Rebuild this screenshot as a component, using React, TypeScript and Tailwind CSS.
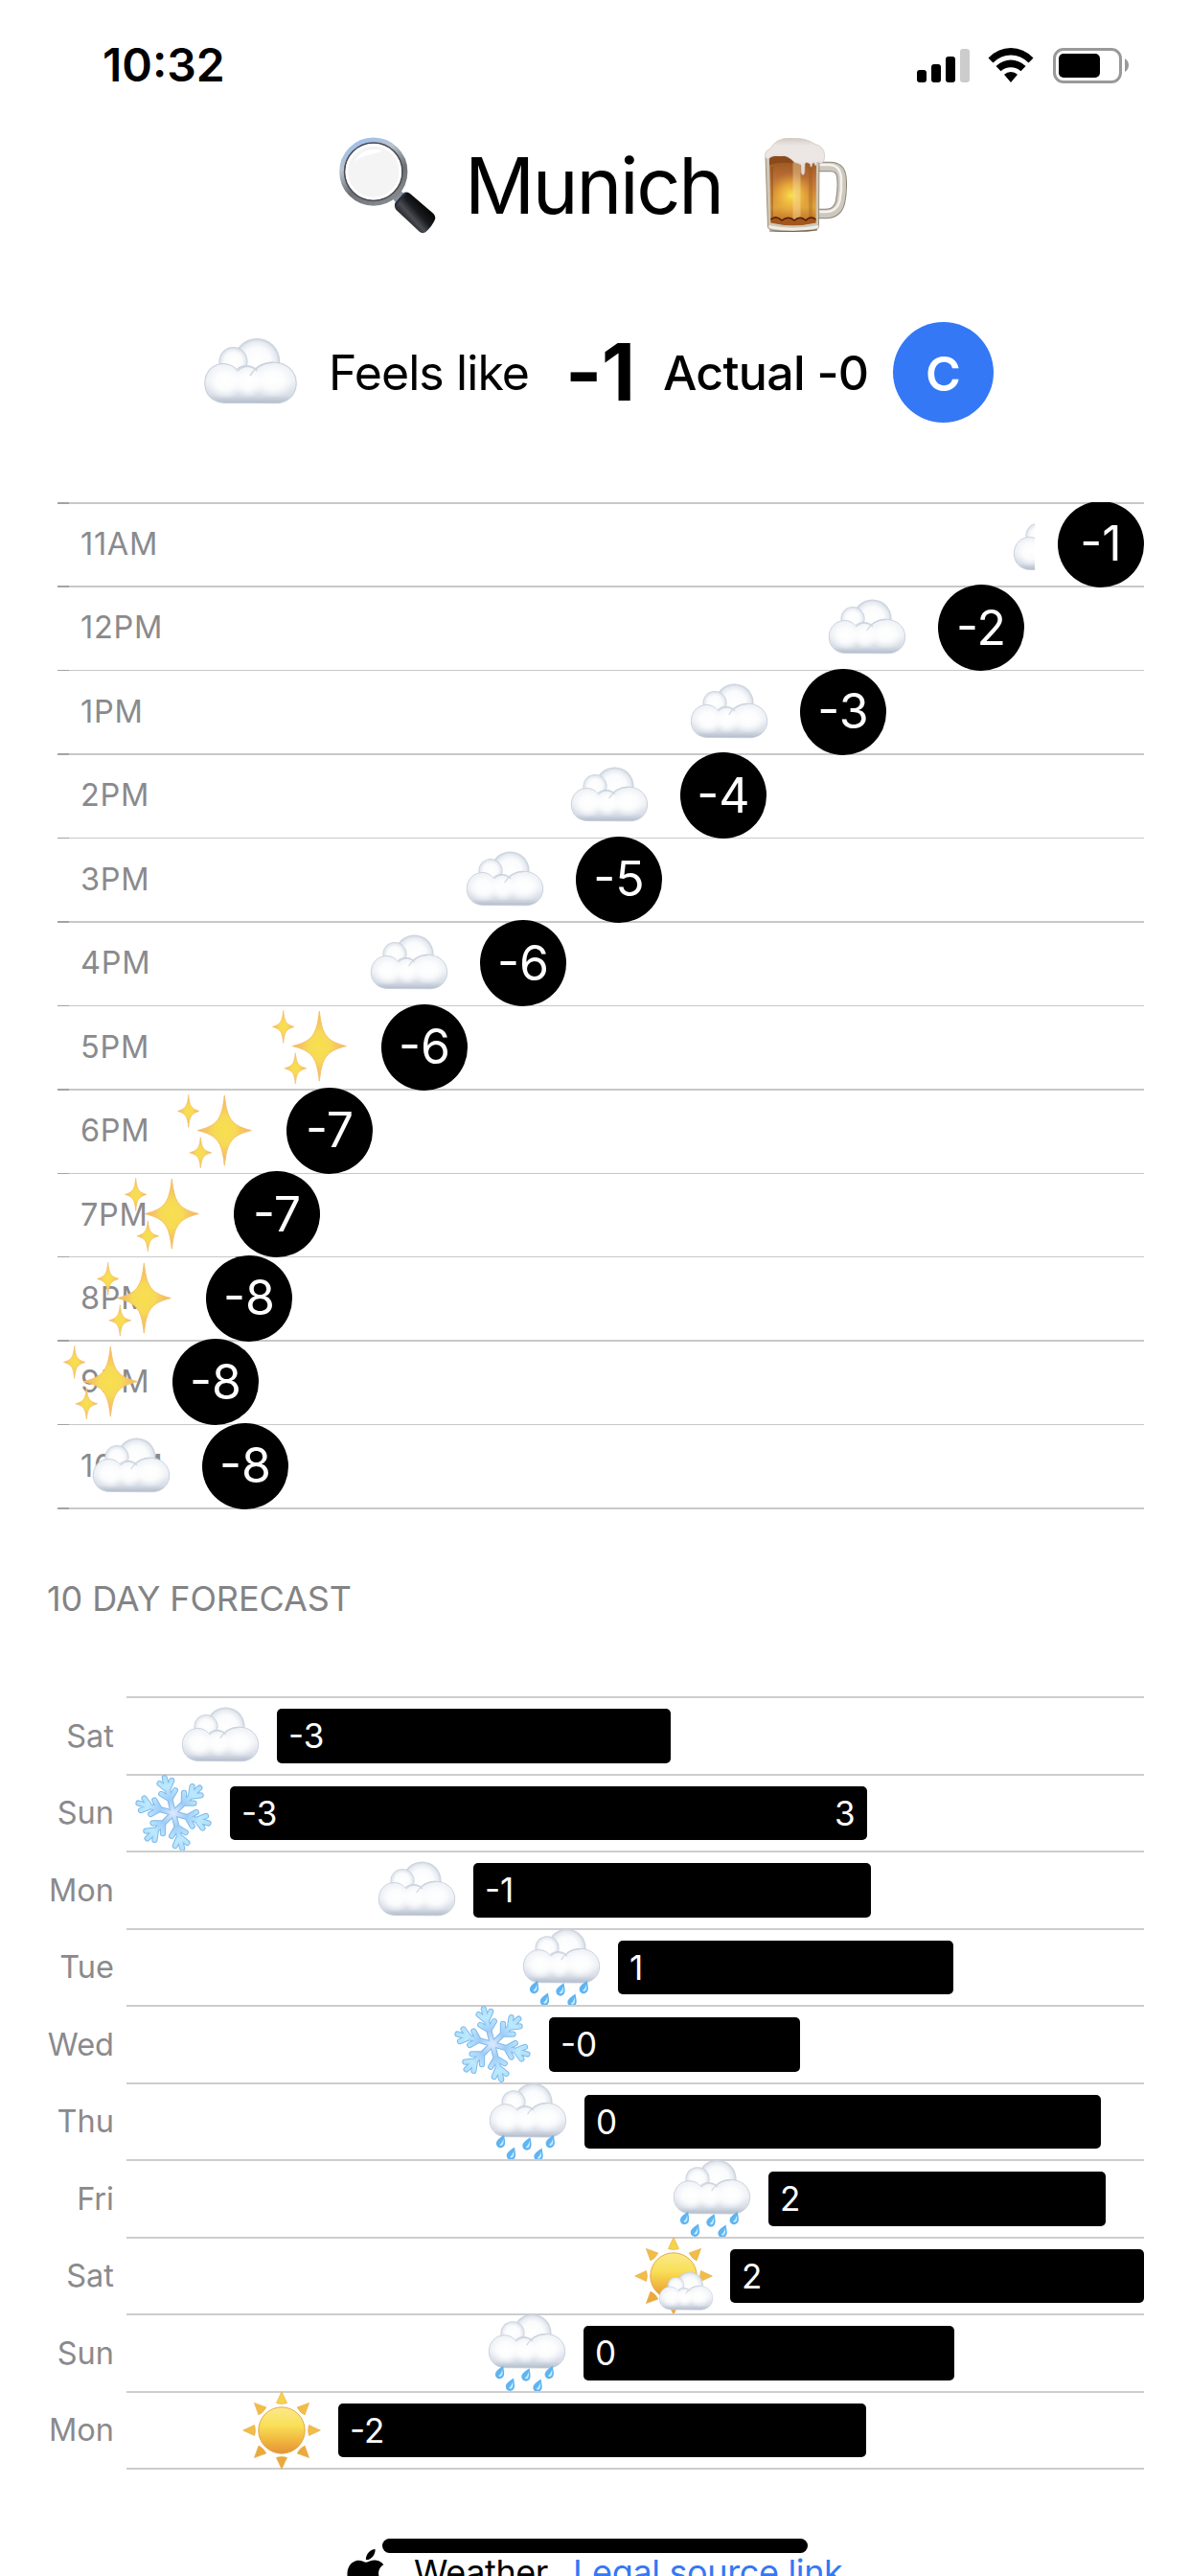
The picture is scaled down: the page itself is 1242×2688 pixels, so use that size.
import React, { useId } from "react";
import { SiApple } from "react-icons/si";

type Kind = "cloud" | "sparkles" | "snow" | "rain" | "sun" | "partly";

function CloudShape({ id }: { id: string }) {
  return (
    <g>
      <defs>
        <radialGradient id={`${id}a`} cx="0.5" cy="0.5" r="0.5">
          <stop offset="0" stopColor="#ffffff" />
          <stop offset="0.6" stopColor="#fafbfc" />
          <stop offset="0.86" stopColor="#e6eaf0" />
          <stop offset="1" stopColor="#c4cdd8" />
        </radialGradient>
        <linearGradient id={`${id}b`} x1="0" y1="34" x2="0" y2="69" gradientUnits="userSpaceOnUse">
          <stop offset="0" stopColor="#eff2f6" />
          <stop offset="0.45" stopColor="#eceff4" />
          <stop offset="0.8" stopColor="#d8dee7" />
          <stop offset="1" stopColor="#b0bac9" />
        </linearGradient>
        <radialGradient id={`${id}c`} cx="0.5" cy="0.5" r="0.5">
          <stop offset="0" stopColor="#ffffff" />
          <stop offset="0.5" stopColor="#ffffff" stopOpacity="0.85" />
          <stop offset="1" stopColor="#ffffff" stopOpacity="0" />
        </radialGradient>
      </defs>
      <circle cx="47.5" cy="32.5" r="20" fill={`url(#${id}a)`} />
      <circle cx="27" cy="32.5" r="12.5" fill={`url(#${id}a)`} />
      <path
        d="M20 68.5C9 68.5 2.3 61 2.3 51.5C2.3 41.5 9.5 34.5 18.5 34.5C23 34.5 27 36.3 29.8 39.8C34 35.6 42 35.2 46.6 39.4C50.6 35.4 56 33.2 61.5 33.2C73 33.2 81.7 41 81.7 51.5C81.7 61.5 74 68.8 63.5 68.8Z"
        fill={`url(#${id}b)`}
        stroke="#c6ceda"
        strokeWidth="0.9"
      />
      <ellipse cx="20" cy="50" rx="17" ry="15" fill={`url(#${id}c)`} />
      <ellipse cx="61.5" cy="49" rx="19.5" ry="15" fill={`url(#${id}c)`} />
      <ellipse cx="40" cy="50" rx="14" ry="14" fill={`url(#${id}c)`} />
      <path d="M31 40.5C36 35.6 43 36 47.4 40.4M42 44.5C46 37.5 53 33.8 61 33.6" fill="none" stroke="#c6ceda" strokeWidth="1.5" strokeLinecap="round" opacity="0.7" />
    </g>
  );
}

function SunShape({ id }: { id: string }) {
  return (
    <g>
      <defs>
        <linearGradient id={`${id}s`} x1="0" y1="0" x2="0" y2="1">
          <stop offset="0" stopColor="#fbe98a" />
          <stop offset="0.4" stopColor="#f9df57" />
          <stop offset="0.75" stopColor="#efb23c" />
          <stop offset="1" stopColor="#e3933a" />
        </linearGradient>
      </defs>
      {[0, 45, 90, 135, 180, 225, 270, 315].map((a) => (
        <path
          key={a}
          d="M42 1.6L47.6 13.6Q42 15.4 36.4 13.6Z"
          transform={`rotate(${a} 42 42)`}
          fill={a > 90 && a < 270 ? "#eba93c" : a === 0 ? "#f6d34b" : "#f1bd45"}
          stroke="#e6a94a"
          strokeWidth="0.6"
        />
      ))}
      <circle cx="42" cy="42" r="24.2" fill={`url(#${id}s)`} stroke="#e2a040" strokeWidth="0.9" />
    </g>
  );
}

function star(cx: number, cy: number, rx: number, ry: number) {
  const a = rx * 0.2;
  const b = ry * 0.16;
  return `M${cx} ${cy - ry}C${cx + a * 0.5} ${cy - b * 2.2} ${cx + a * 1.1} ${cy - b * 0.9} ${cx + rx} ${cy}C${cx + a * 1.1} ${cy + b * 0.9} ${cx + a * 0.5} ${cy + b * 2.2} ${cx} ${cy + ry}C${cx - a * 0.5} ${cy + b * 2.2} ${cx - a * 1.1} ${cy + b * 0.9} ${cx - rx} ${cy}C${cx - a * 1.1} ${cy - b * 0.9} ${cx - a * 0.5} ${cy - b * 2.2} ${cx} ${cy - ry}Z`;
}

function Sparkles({ id }: { id: string }) {
  const stars: [number, number, number, number][] = [
    [51.3, 41.6, 28, 36.5],
    [13.7, 21.4, 11.2, 17],
    [26.3, 64.8, 11.4, 16],
  ];
  return (
    <g>
      <defs>
        <radialGradient id={`${id}k`}>
          <stop offset="0" stopColor="#f7e04f" />
          <stop offset="0.4" stopColor="#f7da55" />
          <stop offset="0.75" stopColor="#f5c063" />
          <stop offset="1" stopColor="#f3b070" />
        </radialGradient>
      </defs>
      {stars.map((s, i) => (
        <path key={i} d={star(...s)} fill={`url(#${id}k)`} stroke="#f6c269" strokeWidth={i ? 0.8 : 1} strokeLinejoin="round" />
      ))}
    </g>
  );
}

const snowAngles = [-14, 46, 106, 166, 226, 286];

function Snow({ id }: { id: string }) {
  const arm = "M42 42V4M42 27L34.5 19.4M42 27L49.5 19.4M42 17L35.5 8.5M42 17L48.5 8.5";
  return (
    <g strokeLinecap="round" fill="none">
      <defs>
        <radialGradient id={`${id}w`} cx="42" cy="42" r="40" gradientUnits="userSpaceOnUse">
          <stop offset="0" stopColor="#dce9fd" />
          <stop offset="0.35" stopColor="#9fccf7" />
          <stop offset="0.7" stopColor="#bbe9fd" />
          <stop offset="1" stopColor="#aedffa" />
        </radialGradient>
      </defs>
      {snowAngles.map((a) => (
        <path key={a} d={arm} transform={`rotate(${a} 42 42)`} stroke="#7fb9ec" strokeWidth="6.2" />
      ))}
      {snowAngles.map((a) => (
        <path key={a} d={arm} transform={`rotate(${a} 42 42)`} stroke={`url(#${id}w)`} strokeWidth="4.2" />
      ))}
    </g>
  );
}

function Rain({ id }: { id: string }) {
  const drops = [
    [14.3, 62.6],
    [25.2, 75.3],
    [41.7, 65],
    [53.8, 76.3],
    [66, 62.6],
  ];
  return (
    <g>
      <g transform="translate(0 -10.8)">
        <CloudShape id={id} />
      </g>
      {drops.map(([x, y], i) => (
        <g key={i} transform={`translate(${x} ${y}) rotate(22)`}>
          <path d="M0 -7.4C2.2 -3.6 4.6 -0.8 4.6 2.2A4.6 4.6 0 0 1 -4.6 2.2C-4.6 -0.8 -2.2 -3.6 0 -7.4Z" fill="#5fb4f1" />
          <path d="M0.8 -3.5C2 -1.5 2.8 0.4 2.6 2.4A2.4 2.4 0 0 1 -0.6 4C0.8 2 1 -0.5 0.8 -3.5Z" fill="#c4ecfd" />
        </g>
      ))}
    </g>
  );
}

function Emoji({ kind, size }: { kind: Kind; size: number }) {
  const id = useId().replace(/[^a-zA-Z0-9]/g, "");
  return (
    <svg viewBox="0 0 84 84" width={size} height={size} className="block shrink-0">
      {kind === "cloud" && <CloudShape id={id} />}
      {kind === "sparkles" && <Sparkles id={id} />}
      {kind === "snow" && <Snow id={id} />}
      {kind === "rain" && <Rain id={id} />}
      {kind === "sun" && <SunShape id={id} />}
      {kind === "partly" && (
        <>
          <SunShape id={`${id}x`} />
          <g transform="translate(25.6 29) scale(0.7)">
            <CloudShape id={id} />
          </g>
        </>
      )}
    </svg>
  );
}

function Magnifier() {
  return (
    <svg viewBox="0 0 101 101" width="101" height="101" className="block shrink-0">
      <defs>
        <linearGradient id="ring" x1="0.2" y1="0" x2="0.7" y2="1">
          <stop offset="0" stopColor="#9fc0ee" />
          <stop offset="0.3" stopColor="#b9c3cf" />
          <stop offset="0.65" stopColor="#6d7075" />
          <stop offset="1" stopColor="#85888c" />
        </linearGradient>
        <linearGradient id="grip" x1="62" y1="87" x2="86" y2="66" gradientUnits="userSpaceOnUse">
          <stop offset="0" stopColor="#0b0c0f" />
          <stop offset="0.4" stopColor="#4b4d52" />
          <stop offset="0.65" stopColor="#1a1b1f" />
          <stop offset="1" stopColor="#050506" />
        </linearGradient>
      </defs>
      <path d="M54 62L62 54L71 62L62 72Z" fill="#8b8e93" />
      <circle cx="35.8" cy="36.2" r="32.4" fill="#f4f4f4" stroke="url(#ring)" strokeWidth="6.4" />
      <circle cx="35.8" cy="36.2" r="30.2" fill="none" stroke="#4a4d52" strokeWidth="1.6" />
      <circle cx="35.8" cy="36.2" r="28" fill="none" stroke="#ffffff" strokeWidth="2.6" />
      <path d="M16 26C21 15 32 11 45 14C38 19 25 17 16 26Z" fill="#fff" />
      <path d="M59 68L67 59Q70.5 56 74 59L98.5 80Q101 83 100 86Q97 93 90.5 99Q87 101.5 83.5 98.5L59.5 76Q56.5 72 59 68Z" fill="url(#grip)" />
      <path d="M59 70L69 58.5" stroke="#26304a" strokeWidth="2" strokeLinecap="round" />
    </svg>
  );
}

function Beer() {
  return (
    <svg viewBox="0 0 86 98" width="86" height="98" className="block shrink-0">
      <defs>
        <linearGradient id="ale" x1="0" y1="20" x2="0" y2="94" gradientUnits="userSpaceOnUse">
          <stop offset="0" stopColor="#93541c" />
          <stop offset="0.25" stopColor="#b56a33" />
          <stop offset="0.45" stopColor="#cc8136" />
          <stop offset="0.7" stopColor="#dda33c" />
          <stop offset="0.88" stopColor="#c8792a" />
          <stop offset="1" stopColor="#8c4514" />
        </linearGradient>
        <radialGradient id="glow" cx="28" cy="60" r="24" gradientUnits="userSpaceOnUse">
          <stop offset="0" stopColor="#fbe04e" />
          <stop offset="0.5" stopColor="#f2b93e" stopOpacity="0.7" />
          <stop offset="1" stopColor="#e09a38" stopOpacity="0" />
        </radialGradient>
        <linearGradient id="froth" x1="0" y1="0" x2="0" y2="1">
          <stop offset="0" stopColor="#d3c9c2" />
          <stop offset="0.2" stopColor="#ebe6e3" />
          <stop offset="0.6" stopColor="#ece7e4" />
          <stop offset="1" stopColor="#ddd5d0" />
        </linearGradient>
      </defs>
      <path d="M56 30H67Q79.5 29 80.5 42Q81.5 54 79 67Q76 79 64 79H56" fill="none" stroke="#8f8577" strokeWidth="10.5" />
      <path d="M56 30H67Q79.5 29 80.5 42Q81.5 54 79 67Q76 79 64 79H56" fill="none" stroke="#cdc8bf" strokeWidth="8.5" />
      <path d="M57 28H67Q79 28 80 42Q80.8 54 78.3 66Q75 77 64 77H57" fill="none" stroke="#f4f2ee" strokeWidth="2.5" />
      <path d="M1 20H57L56.5 93Q56 98 30 98Q3.5 98 3.5 93Z" fill="#cfc7b8" stroke="#8c7a60" strokeWidth="0.8" />
      <path d="M5 20H54L53.5 88Q30 94 6.5 88Z" fill="url(#ale)" />
      <path d="M6 30H53V86H6Z" fill="url(#glow)" />
      <path d="M29.5 26H37.5V87H29.5Z" fill="#fbe6b4" opacity="0.38" />
      <path d="M46 30H50V86H46Z" fill="#8a4a14" opacity="0.25" />
      <path d="M6.5 30H9V86H6.5Z" fill="#7a3f14" opacity="0.35" />
      <path d="M6.5 85Q12 80 18 86Q25 80.5 31 86Q37 80.5 43 86Q48 80.5 53.5 85V88.5Q30 94 6.5 88.5Z" fill="#a4561c" />
      <path d="M6.5 85Q12 80 18 86Q25 80.5 31 86Q37 80.5 43 86Q48 80.5 53.5 85" fill="none" stroke="#4a200a" strokeWidth="1.5" />
      <path d="M4 91Q30 96.5 56.5 91L56 94Q30 99 4.5 94Z" fill="#f1eee6" />
      <path d="M5 97Q30 98.5 55 96" fill="none" stroke="#6e6353" strokeWidth="1" />
      <path d="M5 19H28L30 26Q14 25 5 28Z" fill="#8a4a1a" />
      <path d="M1.5 21Q-2 15 6 11Q12 0 27 0Q44 0 52 6Q62 9 62.5 17Q63 25 59 26.5L55 25Q53 32 52 26Q50 25 49.5 28Q48.5 33 47.5 27Q43 24 42 27L41.8 36Q40 41 38.2 36L38 28Q35 26 31 25.5Q26 19 18 18Q8 18 5 21Q3 23 1.5 21Z" fill="url(#froth)" stroke="#cdc2ba" strokeWidth="0.7" />
    </svg>
  );
}

const hours: { label: string; temp: string; x: number; kind: Kind }[] = [
  { label: "11AM", temp: "-1", x: 1089, kind: "cloud" },
  { label: "12PM", temp: "-2", x: 964, kind: "cloud" },
  { label: "1PM", temp: "-3", x: 820, kind: "cloud" },
  { label: "2PM", temp: "-4", x: 695, kind: "cloud" },
  { label: "3PM", temp: "-5", x: 586, kind: "cloud" },
  { label: "4PM", temp: "-6", x: 486, kind: "cloud" },
  { label: "5PM", temp: "-6", x: 383, kind: "sparkles" },
  { label: "6PM", temp: "-7", x: 284, kind: "sparkles" },
  { label: "7PM", temp: "-7", x: 229, kind: "sparkles" },
  { label: "8PM", temp: "-8", x: 200, kind: "sparkles" },
  { label: "9PM", temp: "-8", x: 165, kind: "sparkles" },
  { label: "10PM", temp: "-8", x: 196, kind: "cloud" },
];

const days: { label: string; low: string; high?: string; from: number; to: number; kind: Kind }[] = [
  { label: "Sat", low: "-3", from: 157, to: 568, kind: "cloud" },
  { label: "Sun", low: "-3", high: "3", from: 108, to: 772.5, kind: "snow" },
  { label: "Mon", low: "-1", from: 362, to: 777, kind: "cloud" },
  { label: "Tue", low: "1", from: 513, to: 862.5, kind: "rain" },
  { label: "Wed", low: "-0", from: 441, to: 702.5, kind: "snow" },
  { label: "Thu", low: "0", from: 478, to: 1016.5, kind: "rain" },
  { label: "Fri", low: "2", from: 670, to: 1022, kind: "rain" },
  { label: "Sat", low: "2", from: 630, to: 1062, kind: "partly" },
  { label: "Sun", low: "0", from: 477, to: 864, kind: "rain" },
  { label: "Mon", low: "-2", from: 221, to: 772, kind: "sun" },
];

function StatusBar() {
  return (
    <div className="flex h-[136px] shrink-0 items-center justify-between pl-[107px] pr-[64px]">
      <span className="text-[48px] font-semibold leading-none">10:32</span>
      <div className="flex items-center">
        <div className="flex h-[35px] items-end gap-[5px]">
          <div className="h-[13px] w-[10px] rounded-[3px] bg-black" />
          <div className="h-[19px] w-[10px] rounded-[3px] bg-black" />
          <div className="h-[27px] w-[10px] rounded-[3px] bg-black" />
          <div className="h-[35px] w-[10px] rounded-[3px] bg-[#cccccc]" />
        </div>
        <svg viewBox="0 0 48 36" width="48" height="36" className="ml-[19px] block">
          <path d="M0.5 10.5Q10.5 0 24 0Q37.5 0 47.5 10.5L42.5 15.5Q34.5 7.5 24 7.5Q13.5 7.5 5.5 15.5Z" />
          <path d="M8.5 19Q15.5 12.5 24 12.5Q32.5 12.5 39.5 19L34.5 24.3Q30 20.3 24 20.3Q18 20.3 13.5 24.3Z" />
          <path d="M17 27.7Q20 25 24 25Q28 25 31 27.7L24 36Z" />
        </svg>
        <div className="ml-[20px] flex items-center">
          <div className="flex h-[37px] w-[72px] items-center rounded-[11px] border-[3px] border-[#999999] pl-[3px]">
            <div className="h-[25px] w-[43px] rounded-[5px] bg-black" />
          </div>
          <svg viewBox="0 0 4 14" width="4" height="14" className="ml-[3px] block">
            <path d="M0 0Q4 2.5 4 7Q4 11.5 0 14Z" fill="#999999" />
          </svg>
        </div>
      </div>
    </div>
  );
}

function HourlyChart() {
  return (
    <div className="relative ml-[60px] mt-[83px] w-[1134px] shrink-0 overflow-hidden">
      {hours.map((h, i) => (
        <div key={h.label} className="relative h-[87.45px]">
          <div className="flex h-[1.5px]">
            <div className="w-[12px] bg-[#a3a3a5]" />
            <div className="grow bg-[#c8c8c8]" />
          </div>
          <span className="absolute left-[24px] top-[24px] text-[32.5px] leading-[40px] tracking-[0.7px] text-[#8a8a8d]">{h.label}</span>
          {i === 0 ? (
            <div className="absolute left-[996px] top-[1.8px] w-[24px] overflow-hidden">
              <Emoji kind="cloud" size={84} />
            </div>
          ) : (
            <div className="absolute top-[1.8px]" style={{ left: h.x - 161 }}>
              <Emoji kind={h.kind} size={84} />
            </div>
          )}
        </div>
      ))}
      <div className="flex h-[2px]">
        <div className="w-[12px] bg-[#a3a3a5]" />
        <div className="grow bg-[#c8c8c8]" />
      </div>
      {hours.map((h, i) => (
        <div
          key={h.label}
          className="absolute flex size-[90px] items-center justify-center rounded-full bg-black text-[50px] text-white"
          style={{ left: h.x - 45, top: i * 87.45 - 1.2 }}
        >
          <span>{h.temp}</span>
        </div>
      ))}
    </div>
  );
}

function DailyChart() {
  return (
    <div className="mt-[70px] w-[1194px] shrink-0">
      {days.map((d, i) => (
        <div key={i} className="flex h-[80.5px]">
          <div className="flex w-[119px] items-center justify-end pt-[3px] text-[32.5px] text-[#8a8a8d]">
            <span>{d.label}</span>
          </div>
          <div className="relative ml-[13px] grow">
            <div className="h-[2px] bg-[#cdcdcd]" />
            <div className="absolute top-[-0.8px]" style={{ left: d.from - 101.5 }}>
              <Emoji kind={d.kind} size={84} />
            </div>
            <div
              className="absolute top-[13px] flex h-[56.3px] items-center justify-between rounded-[5px] bg-black px-[12px] text-[35px] text-white"
              style={{ left: d.from, width: d.to - d.from }}
            >
              <span>{d.low}</span>
              {d.high && <span>{d.high}</span>}
            </div>
          </div>
        </div>
      ))}
      <div className="ml-[132px] h-[2px] bg-[#cdcdcd]" />
    </div>
  );
}

export default function App() {
  return (
    <div className="relative flex h-[2688px] w-[1242px] flex-col overflow-hidden bg-white font-['Inter',sans-serif] text-black">
      <StatusBar />
      <div className="flex h-[114px] shrink-0 items-center pl-[354px]">
        <Magnifier />
        <span className="ml-[30px] w-[270px] pt-[2px] text-[81px] leading-none tracking-[-2.3px]">Munich</span>
        <div className="ml-[43px]">
          <Beer />
        </div>
      </div>
      <div className="mt-[86px] flex h-[105px] shrink-0 items-center whitespace-nowrap pl-[211px]">
        <Emoji kind="cloud" size={101} />
        <span className="ml-[31px] w-[247px] text-[50px] leading-none tracking-[-0.9px]">Feels like</span>
        <span className="w-[102px] text-[82px] font-bold leading-none tracking-[-0.7px]">-1</span>
        <span className="w-[240px] text-[50px] font-medium leading-none tracking-[-0.7px]">Actual -0</span>
        <div className="flex size-[105px] items-center justify-center rounded-full bg-[#3478f6] pt-[3px] text-[50px] font-semibold text-white">C</div>
      </div>
      <HourlyChart />
      <h2 className="ml-[49px] mt-[69px] h-[56px] w-fit shrink-0 text-[36px] leading-[48px] tracking-[-0.1px] text-[#838385]">10 DAY FORECAST</h2>
      <DailyChart />
      <div className="mt-[80px] flex h-[56px] shrink-0 items-start pl-[358px]">
        <SiApple size={48} className="mt-[3px] shrink-0" />
        <span className="ml-[26px] mt-[3px] text-[36px] leading-[48px] tracking-[-0.4px]">Weather</span>
        <span className="ml-[26px] mt-[3px] text-[36px] leading-[48px] tracking-[-0.35px] text-[#3478f6]">Legal source link</span>
      </div>
      <div className="absolute left-[399px] top-[2649px] h-[15px] w-[444px] rounded-full bg-black" />
    </div>
  );
}
